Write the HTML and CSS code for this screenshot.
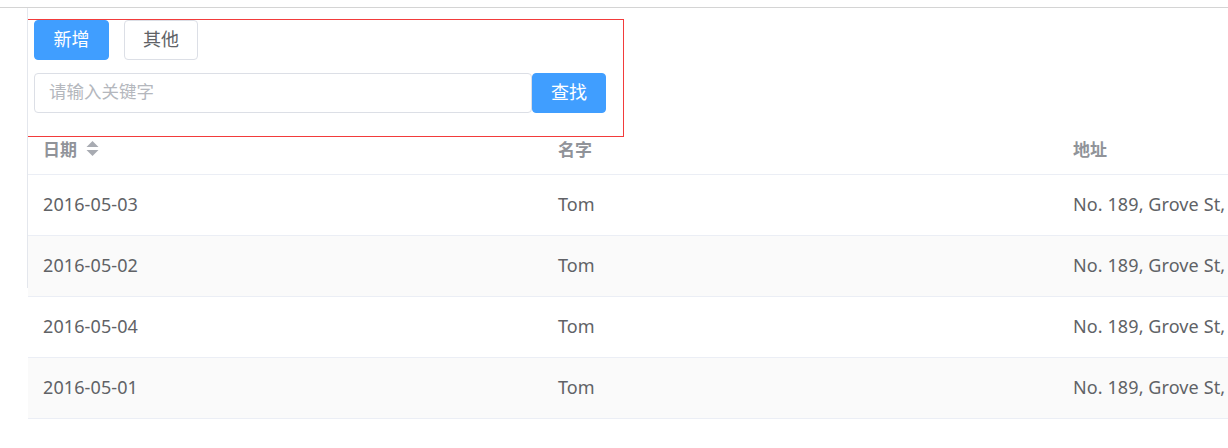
FILE: index.html
```html
<!DOCTYPE html>
<html lang="zh-CN">
<head>
<meta charset="utf-8">
<title>Table</title>
<link rel="stylesheet" href="styles.css">
</head>
<body>
<div class="topbar"></div>
<div class="layout">
  <aside class="aside"></aside>
  <main class="main">
    <div class="toolbar">
      <div class="btn-row">
        <button class="btn btn-primary">新增</button>
        <button class="btn btn-default">其他</button>
      </div>
      <div class="search-row">
        <input class="search-input" type="text" placeholder="请输入关键字">
        <button class="btn btn-primary btn-search">查找</button>
      </div>
    </div>
    <div class="table">
      <div class="tr thead">
        <div class="th">日期
          <svg class="sort" width="13" height="18" viewBox="0 0 13 18"><path d="M6.5 1 L12.5 7 L0.5 7 Z" fill="#a8abb2"/><path d="M0.5 10 L12.5 10 L6.5 16 Z" fill="#a8abb2"/></svg>
        </div>
        <div class="th">名字</div>
        <div class="th">地址</div>
      </div>
      <div class="tr"><div class="td">2016-05-03</div><div class="td">Tom</div><div class="td">No. 189, Grove St, Los Angeles</div></div>
      <div class="tr stripe"><div class="td">2016-05-02</div><div class="td">Tom</div><div class="td">No. 189, Grove St, Los Angeles</div></div>
      <div class="tr"><div class="td">2016-05-04</div><div class="td">Tom</div><div class="td">No. 189, Grove St, Los Angeles</div></div>
      <div class="tr stripe"><div class="td">2016-05-01</div><div class="td">Tom</div><div class="td">No. 189, Grove St, Los Angeles</div></div>
    </div>
  </main>
</div>
</body>
</html>
```
FILE: styles.css
```css
html, body {
  margin: 0;
  padding: 0;
  background: #ffffff;
  overflow: hidden;
}
body {
  font-family: "Noto Sans", "Noto Sans CJK SC", sans-serif;
  font-size: 18px;
  color: #606266;
  width: 1228px;
  height: 448px;
}
.topbar {
  height: 7px;
  border-bottom: 1px solid #d4d4d4;
}
.layout {
  display: flex;
  align-items: flex-start;
}
.aside {
  width: 27px;
  height: 280px;
  border-right: 1px solid #e4e7ed;
  flex: none;
}
.main {
  flex: 1;
  min-width: 0;
  overflow: hidden;
}
.toolbar {
  box-sizing: border-box;
  width: 598px;
  height: 118px;
  margin-top: 11px;
  margin-left: -2px;
  border: 1px solid #f23b3b;
  padding: 0 0 0 7px;
  display: flex;
  flex-direction: column;
  gap: 13px;
}
.btn-row {
  display: flex;
  gap: 15px;
}
.btn {
  box-sizing: border-box;
  height: 40px;
  width: 75px;
  padding: 0 0 5px;
  border-radius: 4px;
  font-family: "Noto Sans CJK SC", sans-serif;
  font-size: 18px;
  line-height: 24px;
  cursor: pointer;
}
.btn-primary {
  background: #409eff;
  border: 1px solid #409eff;
  color: #ffffff;
}
.btn-default {
  width: 74px;
  background: #ffffff;
  border: 1px solid #dcdfe6;
  color: #606266;
}
.search-row {
  display: flex;
}
.search-input {
  box-sizing: border-box;
  width: 498px;
  height: 40px;
  border: 1px solid #dcdfe6;
  border-radius: 4px;
  padding: 0 14px 5px;
  font-family: "Noto Sans CJK SC", sans-serif;
  font-size: 17.5px;
  color: #606266;
  outline: none;
}
.search-input::placeholder {
  color: #b4b7bd;
}
.btn-search {
  width: 74px;
}
.table {
  width: 1545px;
}
.tr {
  display: flex;
  border-bottom: 1px solid #ebeef5;
  height: 61px;
  box-sizing: border-box;
  align-items: center;
}
.tr.stripe {
  background: #fafafa;
}
.thead {
  height: 38px;
  align-items: flex-start;
}
.th, .td {
  width: 515px;
  flex: none;
  box-sizing: border-box;
  padding: 0 15px;
  white-space: nowrap;
  overflow: hidden;
}
.th {
  font-family: "Noto Sans CJK SC", sans-serif;
  font-weight: bold;
  font-size: 17px;
  color: #909399;
  line-height: 24px;
  padding-top: 0;
  display: flex;
  align-items: center;
  gap: 9px;
}
.td {
  line-height: 24px;
  padding-bottom: 2px;
  letter-spacing: 0.1px;
}
.sort {
  display: block;
}
```
